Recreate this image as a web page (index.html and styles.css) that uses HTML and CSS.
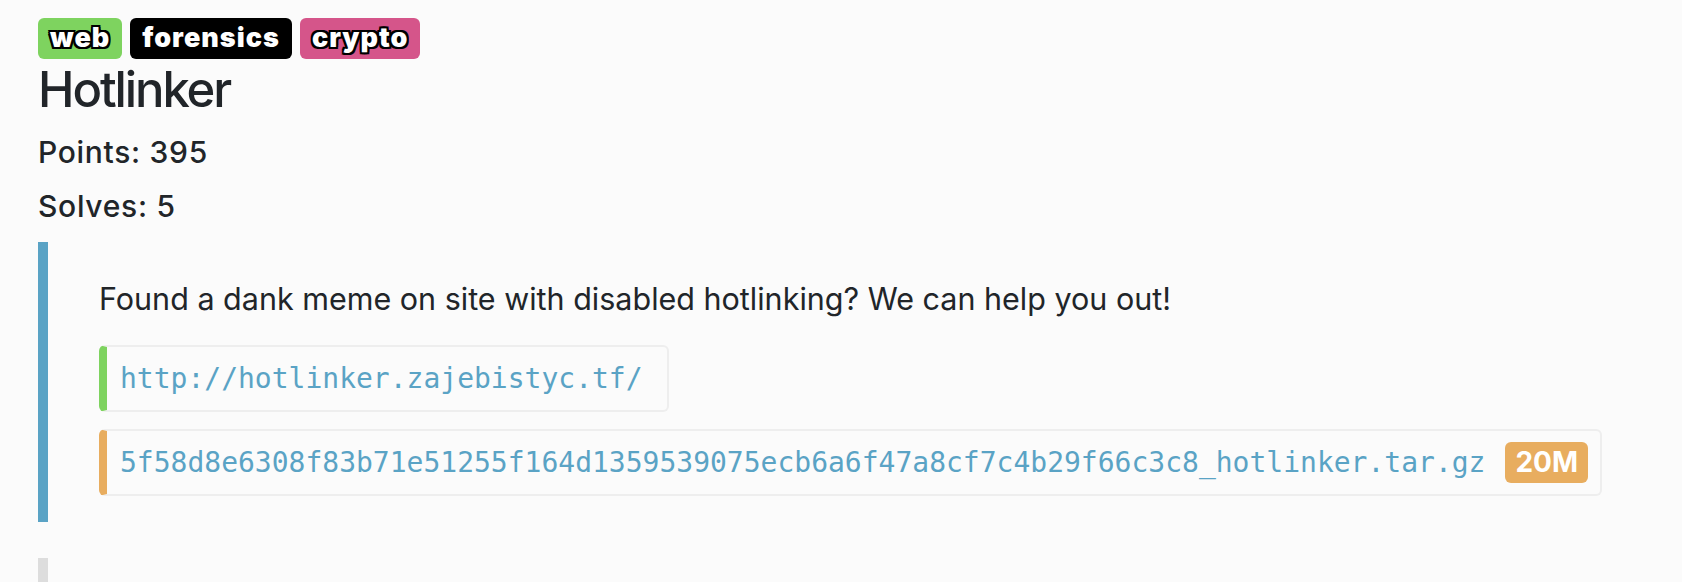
FILE: index.html
```html
<!DOCTYPE html>
<html lang="en">
<head>
<meta charset="utf-8">
<title>Hotlinker</title>
<link rel="stylesheet" href="styles.css">
</head>
<body>
<main class="page">
  <section class="challenge">
    <div class="tags">
      <span class="tag tag-web">web</span>
      <span class="tag tag-forensics">forensics</span>
      <span class="tag tag-crypto">crypto</span>
    </div>
    <h1 class="title">Hotlinker</h1>
    <p class="meta">Points: 395</p>
    <p class="meta">Solves: 5</p>
    <div class="body">
      <p class="desc">Found a dank meme on site with disabled hotlinking? We can help you out!</p>
      <div class="res res-link"><span class="res-text">http://hotlinker.zajebistyc.tf/</span></div>
      <div class="res res-file"><span class="res-text">5f58d8e6308f83b71e51255f164d1359539075ecb6a6f47a8cf7c4b29f66c3c8_hotlinker.tar.gz</span><span class="size">20M</span></div>
    </div>
  </section>
  <section class="next"></section>
</main>
</body>
</html>
```

FILE: styles.css
```css
html, body {
  margin: 0;
  padding: 0;
  background: #fbfbfb;
}
body {
  font-family: Inter, "Liberation Sans", sans-serif;
  color: #212529;
  overflow: hidden;
}
.page {
  padding: 18px 0 0 38px;
}
.tags {
  display: flex;
  gap: 8px;
}
.tag {
  display: inline-block;
  height: 41px;
  line-height: 40px;
  padding: 0 12px;
  border-radius: 6px;
  font-family: Inter, "Liberation Sans", sans-serif;
  font-weight: 900;
  font-size: 27px;
  letter-spacing: 1px;
  color: #fff;
  text-shadow:
    -2px -2px 0 #000, 2px -2px 0 #000, -2px 2px 0 #000, 2px 2px 0 #000,
    0 -2px 0 #000, 0 2px 0 #000, -2px 0 0 #000, 2px 0 0 #000;
}
.tag-web { background: #7ed35f; }
.tag-forensics { background: #000; }
.tag-crypto { background: #d5558a; }
.title {
  margin: 2px 0 11px;
  font-size: 49px;
  line-height: 1.2;
  font-weight: 500;
  letter-spacing: -2.1px;
}
.meta {
  margin: 0 0 11px;
  font-size: 30px;
  line-height: 1.45;
  font-weight: 500;
  letter-spacing: 0.7px;
}
.body {
  margin-top: 13px;
  border-left: 10px solid #5aa3c5;
  padding: 34px 0 26px 51px;
}
.desc {
  margin: 0 0 23px;
  font-size: 30.5px;
  line-height: 1.5;
}
.res {
  display: flex;
  width: fit-content;
  align-items: center;
  border: 2px solid #eeeeee;
  border-left: 8px solid #7ed35f;
  border-radius: 6px;
  padding: 15px 24px 15px 13px;
  font-family: "DejaVu Sans Mono", "Liberation Mono", monospace;
  font-size: 28px;
  line-height: 33px;
  color: #5aa3c5;
}
.res-link { border-left-color: #7ed35f; }
.res-file {
  margin-top: 17px;
  border-left-color: #e8ad5f;
  padding-right: 12px;
}
.size {
  margin: -4px 0 -4px 20px;
  background: #e8ad5f;
  color: #fff;
  border-radius: 6px;
  padding: 0 10px;
  height: 41px;
  line-height: 41px;
  font-family: Inter, "Liberation Sans", sans-serif;
  font-weight: 700;
  font-size: 28px;
}
.next {
  margin-top: 36px;
  border-left: 10px solid #dddddd;
  height: 60px;
}
```
